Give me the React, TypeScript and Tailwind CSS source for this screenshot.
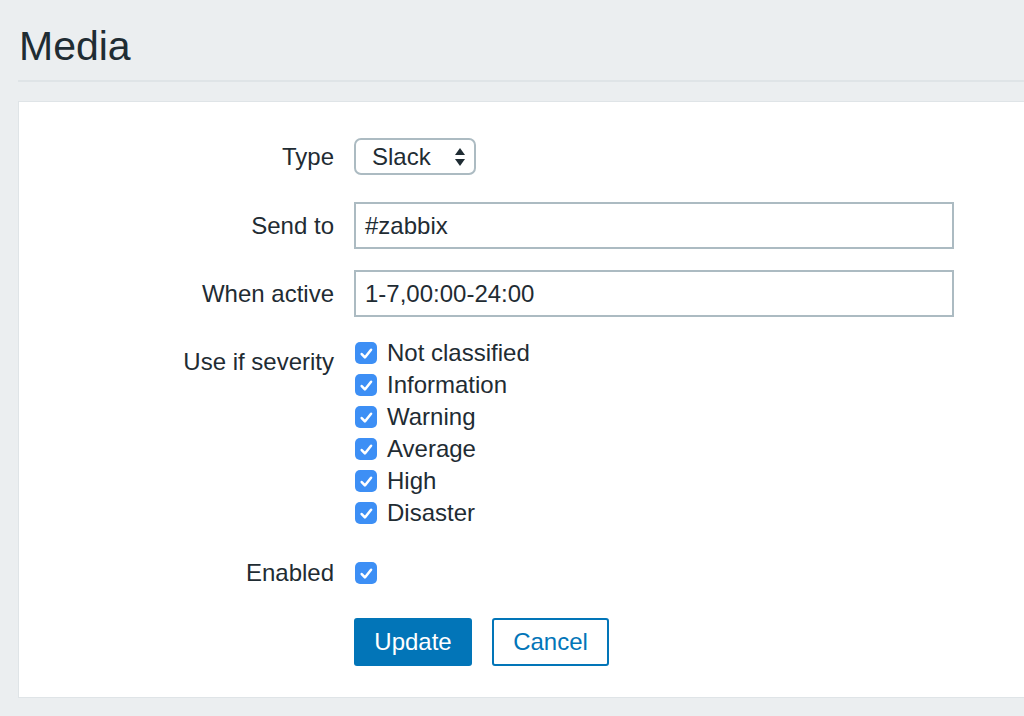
import React from 'react';

const severities = ['Not classified', 'Information', 'Warning', 'Average', 'High', 'Disaster'];

const Check = () => (
  <span className="flex h-[22px] w-[22px] shrink-0 items-center justify-center rounded-[5px] bg-[#3d8ff5]">
    <svg viewBox="0 0 16 16" className="h-[17px] w-[17px]" fill="none">
      <path d="M3.5 8.5l3 3.2 5.8-7.2" stroke="#fff" strokeWidth="2.4" strokeLinecap="round" strokeLinejoin="round" />
    </svg>
  </span>
);

const Row = ({ label, className = '', labelClass = '', children }) => (
  <div className={`flex ${className}`}>
    <div className={`w-[315px] shrink-0 text-right ${labelClass}`}>{label}</div>
    <div className="ml-[20px]">{children}</div>
  </div>
);

export default function App() {
  return (
    <div
      className="h-[716px] w-[1024px] overflow-hidden bg-[#ebeef0] pl-[18px] text-[24px] text-[#1f2c33]"
      style={{ fontFamily: '"Liberation Sans", Arial, sans-serif' }}
    >
      {/* header */}
      <div className="flex h-[82px] items-center border-b-2 border-[#dfe4e7] pt-[12px] pl-[1px]">
        <h1 className="text-[41px] font-normal leading-none">Media</h1>
      </div>

      {/* form panel */}
      <div className="mt-[19px] w-[1040px] border border-[#dfe4e7] bg-white pt-[36px] pb-[31px]">
        <Row label="Type" className="items-center">
          <div className="flex h-[37px] w-[122px] items-center justify-between rounded-[7px] border-2 border-[#acbbc2] pl-[16px] pr-[8px]">
            <span>Slack</span>
            <svg viewBox="0 0 12 20" className="h-[20px] w-[12px]">
              <path d="M6 1L11 8H1z" fill="#1f2c33" />
              <path d="M6 19L11 12H1z" fill="#1f2c33" />
            </svg>
          </div>
        </Row>

        <Row label="Send to" className="mt-[27px] items-center">
          <div className="flex h-[47px] w-[600px] items-center border-2 border-[#acbbc2] pl-[9px]">#zabbix</div>
        </Row>

        <Row label="When active" className="mt-[21px] items-center">
          <div className="flex h-[47px] w-[600px] items-center border-2 border-[#acbbc2] pl-[9px]">1-7,00:00-24:00</div>
        </Row>

        <Row label="Use if severity" className="mt-[20px]" labelClass="pt-[9px] leading-[32px]">
          <div className="flex flex-col">
            {severities.map((s) => (
              <div key={s} className="flex h-[32px] items-center gap-[10px] pl-[1px]">
                <Check />
                <span>{s}</span>
              </div>
            ))}
          </div>
        </Row>

        <Row label="Enabled" className="mt-[28px] h-[32px] items-center">
          <div className="pl-[1px]">
            <Check />
          </div>
        </Row>

        <Row label="" className="mt-[29px]">
          <div className="flex gap-[20px]">
            <button className="h-[48px] w-[118px] rounded-[3px] bg-[#0275b8] text-white">Update</button>
            <button className="h-[48px] w-[117px] rounded-[3px] border-2 border-[#0275b8] bg-white text-[#0275b8]">Cancel</button>
          </div>
        </Row>
      </div>
    </div>
  );
}
